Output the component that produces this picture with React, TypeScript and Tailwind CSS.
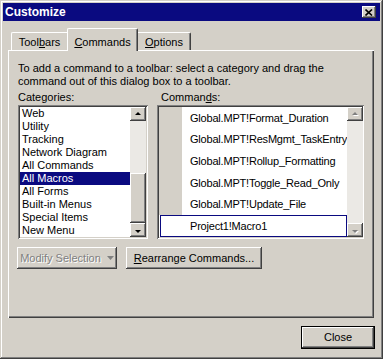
import React from 'react'

const raised =
  'shadow-[inset_-1px_-1px_#404040,inset_1px_1px_#ffffff,inset_-2px_-2px_#808080,inset_2px_2px_#d4d0c8]'
const sunken =
  'shadow-[inset_1px_1px_#808080,inset_-1px_-1px_#ffffff,inset_2px_2px_#404040,inset_-2px_-2px_#d4d0c8]'

function Arrow({ dir, disabled }: { dir: 'up' | 'down'; disabled?: boolean }) {
  const pts = dir === 'up' ? '4,6 7,3 10,6 ' : '4,5 7,8 10,5'
  return (
    <svg width="14" height="11" viewBox="0 0 14 11">
      {disabled && (
        <polygon
          points={dir === 'up' ? '5,7 8,4 11,7' : '5,6 8,9 11,6'}
          fill="#ffffff"
        />
      )}
      <polygon points={pts} fill={disabled ? '#808080' : '#000000'} />
    </svg>
  )
}

function ScrollButton({ dir, disabled }: { dir: 'up' | 'down'; disabled?: boolean }) {
  return (
    <div className={`w-[16px] h-[14px] bg-[#d4d0c8] flex items-center justify-center ${raised}`}>
      <Arrow dir={dir} disabled={disabled} />
    </div>
  )
}

export default function App() {
  const categories = [
    'Web',
    'Utility',
    'Tracking',
    'Network Diagram',
    'All Commands',
    'All Macros',
    'All Forms',
    'Built-in Menus',
    'Special Items',
    'New Menu',
  ]
  const commands = [
    'Global.MPT!Format_Duration',
    'Global.MPT!ResMgmt_TaskEntry',
    'Global.MPT!Rollup_Formatting',
    'Global.MPT!Toggle_Read_Only',
    'Global.MPT!Update_File',
    'Project1!Macro1',
  ]

  return (
    <div
      className="w-[383px] h-[359px] bg-[#d4d0c8] p-[3px] flex flex-col text-[11px] text-black shadow-[inset_-1px_-1px_#404040,inset_1px_1px_#d4d0c8,inset_-2px_-2px_#808080,inset_2px_2px_#ffffff]"
      style={{ fontFamily: '"Liberation Sans", Arial, sans-serif' }}
    >
      {/* Title bar */}
      <div className="h-[18px] bg-[#0a0a80] flex items-center justify-between pl-[2px] pr-[4px]">
        <span className="text-white font-bold text-[12px] leading-none">Customize</span>
        <div className={`w-[14px] h-[12px] bg-[#d4d0c8] flex items-center justify-center ${raised}`}>
          <svg width="8" height="7" viewBox="0 0 8 7">
            <path d="M0.5 0.5 L7 6.5 M7 0.5 L0.5 6.5" stroke="#000" strokeWidth="1.6" />
          </svg>
        </div>
      </div>

      {/* Tabs */}
      <div className="mt-[7px] h-[22px] flex items-end pl-[8px]">
        <div className="w-[56px] h-[18px] border-t border-l border-white rounded-tl-[2px] flex items-center justify-center pt-[1px]">
          <span>
            Tool<u>b</u>ars
          </span>
        </div>
        <div className="relative z-10 -mb-px w-[71px] h-[23px] bg-[#d4d0c8] border-t border-l border-r border-white border-r-[#404040] rounded-t-[2px] shadow-[inset_-1px_0_#808080] flex justify-center pt-[5px]">
          <span>
            <u>C</u>ommands
          </span>
        </div>
        <div className="w-[53px] h-[18px] border-t border-r border-white border-r-[#404040] rounded-tr-[2px] shadow-[inset_-1px_0_#808080] flex items-center justify-center pt-[1px]">
          <span>
            <u>O</u>ptions
          </span>
        </div>
      </div>

      {/* Tab panel */}
      <div className="ml-[5px] mr-[6px] h-[268px] pl-[9px] pt-[12px] shadow-[inset_1px_1px_#ffffff,inset_-1px_-1px_#404040,inset_-2px_-2px_#808080]">
        <p className="leading-[13px] ml-px">
          To add a command to a toolbar: select a category and drag the
          <br />
          command out of this dialog box to a toolbar.
        </p>
        <div className="flex mt-[3px]">
          <div className="ml-px w-[130px]">
            <div className="leading-[13px] h-[13px]">Categories:</div>
            <div className={`mt-px h-[134px] bg-white p-[2px] flex ${sunken}`}>
              <div className="flex-1 flex flex-col">
                {categories.map((c) => (
                  <div
                    key={c}
                    className={`h-[13px] leading-[13px] pl-[2px] ${
                      c === 'All Macros' ? 'bg-[#0a0a80] text-white' : ''
                    }`}
                  >
                    {c}
                  </div>
                ))}
              </div>
              <div className="w-[16px] flex flex-col">
                <ScrollButton dir="up" />
                <div className="h-[52px] bg-[#ebe9e5]" />
                <div className={`flex-1 bg-[#d4d0c8] ${raised}`} />
                <ScrollButton dir="down" />
              </div>
            </div>
          </div>

          <div className="ml-[9px] w-[207px]">
            <div className="leading-[13px] h-[13px] pl-[4px]">
              Comman<u>d</u>s:
            </div>
            <div className={`mt-px h-[134px] bg-white p-[2px] flex ${sunken}`}>
              <div className="flex-1 flex flex-col">
                {commands.map((c, i) => {
                  const sel = i === commands.length - 1
                  return (
                    <div key={c} className="h-[22px] flex">
                      {sel ? (
                        <div className="ml-px flex-1 border border-[#0a0a80] bg-white flex items-center pl-[29px] tracking-[-0.2px]">
                          {c}
                        </div>
                      ) : (
                        <>
                          <div className="w-[23px] bg-[#d4d0c8]" />
                          <div className="flex-1 flex items-center pl-[8px] tracking-[-0.2px]">{c}</div>
                        </>
                      )}
                    </div>
                  )
                })}
              </div>
              <div className="w-[16px] flex flex-col bg-[#ebe9e5]">
                <ScrollButton dir="up" disabled />
                <div className="flex-1" />
                <ScrollButton dir="down" disabled />
              </div>
            </div>
          </div>
        </div>

        <div className="flex mt-[8px] gap-[9px]">
          <div
            className={`w-[100px] h-[22px] flex items-center justify-center gap-[6px] text-[#808080] ${raised}`}
          >
            <span className="[text-shadow:1px_1px_0_#ffffff]">Modify Selection</span>
            <svg width="7" height="4" viewBox="0 0 7 4">
              <polygon points="0,0 7,0 3.5,4" fill="#808080" />
            </svg>
          </div>
          <div className={`w-[136px] h-[22px] flex items-center justify-center ${raised}`}>
            <span>
              <u>R</u>earrange Commands...
            </span>
          </div>
        </div>
      </div>

      {/* Footer */}
      <div className="mt-[8px] flex justify-end mr-[5px]">
        <div className="w-[74px] h-[23px] border border-black">
          <div className={`w-full h-full flex items-center justify-center ${raised}`}>Close</div>
        </div>
      </div>
    </div>
  )
}
